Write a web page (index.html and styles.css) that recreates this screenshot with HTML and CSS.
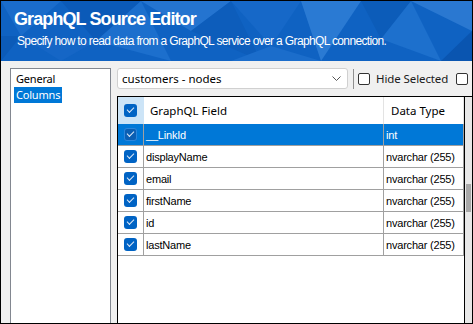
FILE: index.html
```html
<!DOCTYPE html>
<html>
<head>
<meta charset="utf-8">
<link rel="stylesheet" href="styles.css">
</head>
<body>
<div class="window">
  <div class="banner">
    <svg class="facets" width="471" height="60" viewBox="0 0 471 60" aria-hidden="true">
      <rect width="471" height="60" fill="#0f62c2"/>
      <polygon points="0,0 60,0 20,35" fill="#1a6ccb"/>
      <polygon points="0,35 20,35 0,60" fill="#0c5bb8"/>
      <polygon points="60,0 140,0 95,40" fill="#0b5ab8"/>
      <polygon points="95,40 140,0 170,60" fill="#1c6fcd"/>
      <polygon points="140,0 230,0 190,30" fill="#2474d0"/>
      <polygon points="190,30 230,0 260,60" fill="#0d5dbb"/>
      <polygon points="230,0 300,0 270,45" fill="#1668c8"/>
      <polygon points="300,0 360,0 320,60" fill="#2a7ad3"/>
      <polygon points="360,0 410,0 380,38" fill="#0c5cb9"/>
      <polygon points="380,38 410,0 440,60" fill="#1d70cd"/>
      <polygon points="410,0 471,0 471,30" fill="#2a78d1"/>
      <polygon points="440,60 471,30 471,60" fill="#0a55b0"/>
      <polygon points="20,35 95,40 60,60" fill="#1566c6"/>
      <polygon points="270,45 320,60 230,60" fill="#1b6dcb"/>
    </svg>
    <div class="title">GraphQL Source Editor</div>
    <div class="subtitle">Specify how to read data from a GraphQL service over a GraphQL connection.</div>
  </div>
  <div class="main">
    <div class="nav">
      <div class="nav-item">General</div>
      <div class="nav-item selected">Columns</div>
    </div>
    <div class="content">
      <div class="toolbar">
        <div class="combo">
          <span class="combo-text">customers - nodes</span>
          <svg class="chev" width="9" height="5" viewBox="0 0 9 5"><path d="M0.5 0.5 L4.5 4.5 L8.5 0.5" fill="none" stroke="#555" stroke-width="1"/></svg>
        </div>
        <div class="sep"></div>
        <div class="cb-empty"></div>
        <span class="hide-label">Hide Selected</span>
        <div class="cb-empty"></div>
      </div>
      <div class="gridwrap">
        <div class="grid">
          <div class="row head">
            <div class="cell chk headchk"><span class="cb"></span></div>
            <div class="cell field">GraphQL Field</div>
            <div class="cell dtype">Data Type</div>
          </div>
          <div class="row sel">
            <div class="cell chk"><span class="cb dark"></span></div>
            <div class="cell field">__LinkId</div>
            <div class="cell dtype">int</div>
          </div>
          <div class="row">
            <div class="cell chk"><span class="cb"></span></div>
            <div class="cell field">displayName</div>
            <div class="cell dtype">nvarchar (255)</div>
          </div>
          <div class="row">
            <div class="cell chk"><span class="cb"></span></div>
            <div class="cell field">email</div>
            <div class="cell dtype">nvarchar (255)</div>
          </div>
          <div class="row">
            <div class="cell chk"><span class="cb"></span></div>
            <div class="cell field">firstName</div>
            <div class="cell dtype">nvarchar (255)</div>
          </div>
          <div class="row">
            <div class="cell chk"><span class="cb"></span></div>
            <div class="cell field">id</div>
            <div class="cell dtype">nvarchar (255)</div>
          </div>
          <div class="row">
            <div class="cell chk"><span class="cb"></span></div>
            <div class="cell field">lastName</div>
            <div class="cell dtype">nvarchar (255)</div>
          </div>
        </div>
        <div class="scroll"><div class="thumb"></div></div>
      </div>
    </div>
  </div>
</div>
</body>
</html>
```

FILE: styles.css
```css
* { box-sizing: border-box; }
html, body { margin: 0; padding: 0; }
body { width: 473px; height: 324px; overflow: hidden; background: #f0f0f0; }

.window {
  width: 473px;
  height: 324px;
  border: 1px solid #000;
  background: #f0f0f0;
  display: flex;
  flex-direction: column;
  overflow: hidden;
  font-family: "Noto Sans", "Liberation Sans", sans-serif;
}

.banner {
  position: relative;
  height: 60px;
  flex: none;
  color: #fff;
  padding: 7px 0 0 13px;
  overflow: hidden;
}
.facets { position: absolute; left: 0; top: 0; z-index: 0; }
.title, .subtitle { position: relative; z-index: 1; }
.title {
  font-family: "Liberation Sans", Arial, sans-serif;
  font-weight: bold;
  font-size: 18px;
  line-height: 22px;
  letter-spacing: -0.9px;
}
.subtitle {
  font-family: "Liberation Sans", Arial, sans-serif;
  font-size: 12px;
  line-height: 16px;
  margin-top: 3px;
  margin-left: 3px;
  letter-spacing: -0.64px;
}

.main {
  flex: 1;
  display: flex;
  padding: 7px 0 0 9px;
  min-height: 0;
}

.nav {
  width: 101px;
  background: #fff;
  border: 1px solid #828790;
  border-bottom: none;
  padding: 2px 0 0 3px;
  flex: none;
}
.nav-item {
  font-family: "Noto Sans", sans-serif;
  font-size: 11px;
  line-height: 16px;
  padding-left: 2px;
  padding-right: 2px;
  color: #000;
  width: max-content;
  letter-spacing: -0.2px;
}
.nav-item.selected { background: #0078d7; color: #fff; }

.content {
  flex: 1;
  margin-left: 6px;
  display: flex;
  flex-direction: column;
  min-width: 0;
}

.toolbar {
  height: 21px;
  display: flex;
  align-items: center;
  flex: none;
  white-space: nowrap;
}
.combo {
  width: 231px;
  height: 21px;
  background: #fff;
  border: 1px solid #d0d0d0;
  border-radius: 3px;
  display: flex;
  align-items: center;
  justify-content: space-between;
  padding: 0 6px 0 4px;
  flex: none;
}
.combo-text { font-size: 11.5px; color: #000; }
.chev { display: block; }
.sep { width: 1px; height: 20px; background: #909090; margin: 0 4px 0 5px; flex: none; }
.cb-empty {
  width: 12px;
  height: 12px;
  border: 1px solid #333;
  border-radius: 2px;
  background: #fff;
  flex: none;
}
.hide-label { font-size: 11.5px; color: #1a1a1a; margin: 0 8px 0 6px; letter-spacing: -0.1px; }

.gridwrap {
  margin-top: 7px;
  flex: 1;
  display: flex;
  border: 1px solid #000;
  border-bottom: none;
  background: #fff;
  width: 356px;
  min-height: 0;
}
.grid {
  width: 347px;
  border-right: 1px solid #000;
  flex: none;
}
.row {
  display: grid;
  grid-template-columns: 26px 240px 80px;
  height: 22px;
}
.cell {
  border-right: 1px solid #a0a0a0;
  border-bottom: 1px solid #a0a0a0;
  display: flex;
  align-items: center;
  font-family: "Liberation Sans", Arial, sans-serif;
  font-size: 11px;
  letter-spacing: -0.2px;
  color: #000;
  padding-left: 2px;
  white-space: nowrap;
  overflow: hidden;
}
.cell.chk { justify-content: center; padding-left: 0; }
.cell.dtype { padding-left: 2px; }

.row.head { height: 27px; }
.row.head .cell {
  border-bottom: none;
  border-right: 1px solid #e3e3e3;
  font-family: "Noto Sans", sans-serif;
  font-size: 11.5px;
  letter-spacing: 0;
}
.row.head .field { padding-left: 6px; }
.row.head .dtype { padding-left: 7px; }
.row.head .headchk { background: #cce4f7; border-right: 1px solid #cce4f7; }

.row.sel .cell { background: #0078d7; color: #fff; }

.cb {
  width: 13px;
  height: 13px;
  border-radius: 3px;
  background: #0063c4;
  position: relative;
  display: block;
}
.cb::after {
  content: "";
  position: absolute;
  left: 3px;
  top: 3px;
  width: 6px;
  height: 3px;
  border-left: 1px solid #dfeaf7;
  border-bottom: 1px solid #dfeaf7;
  transform: rotate(-45deg);
}
.cb.dark { background: #0a5fb4; box-shadow: 0 0 0 1px #2b86dc inset; }

.scroll {
  width: 7px;
  background: #e8e8e8;
  flex: none;
  padding: 87px 1px 0 1px;
}
.thumb { height: 28px; background: #a8a8a8; }
```
